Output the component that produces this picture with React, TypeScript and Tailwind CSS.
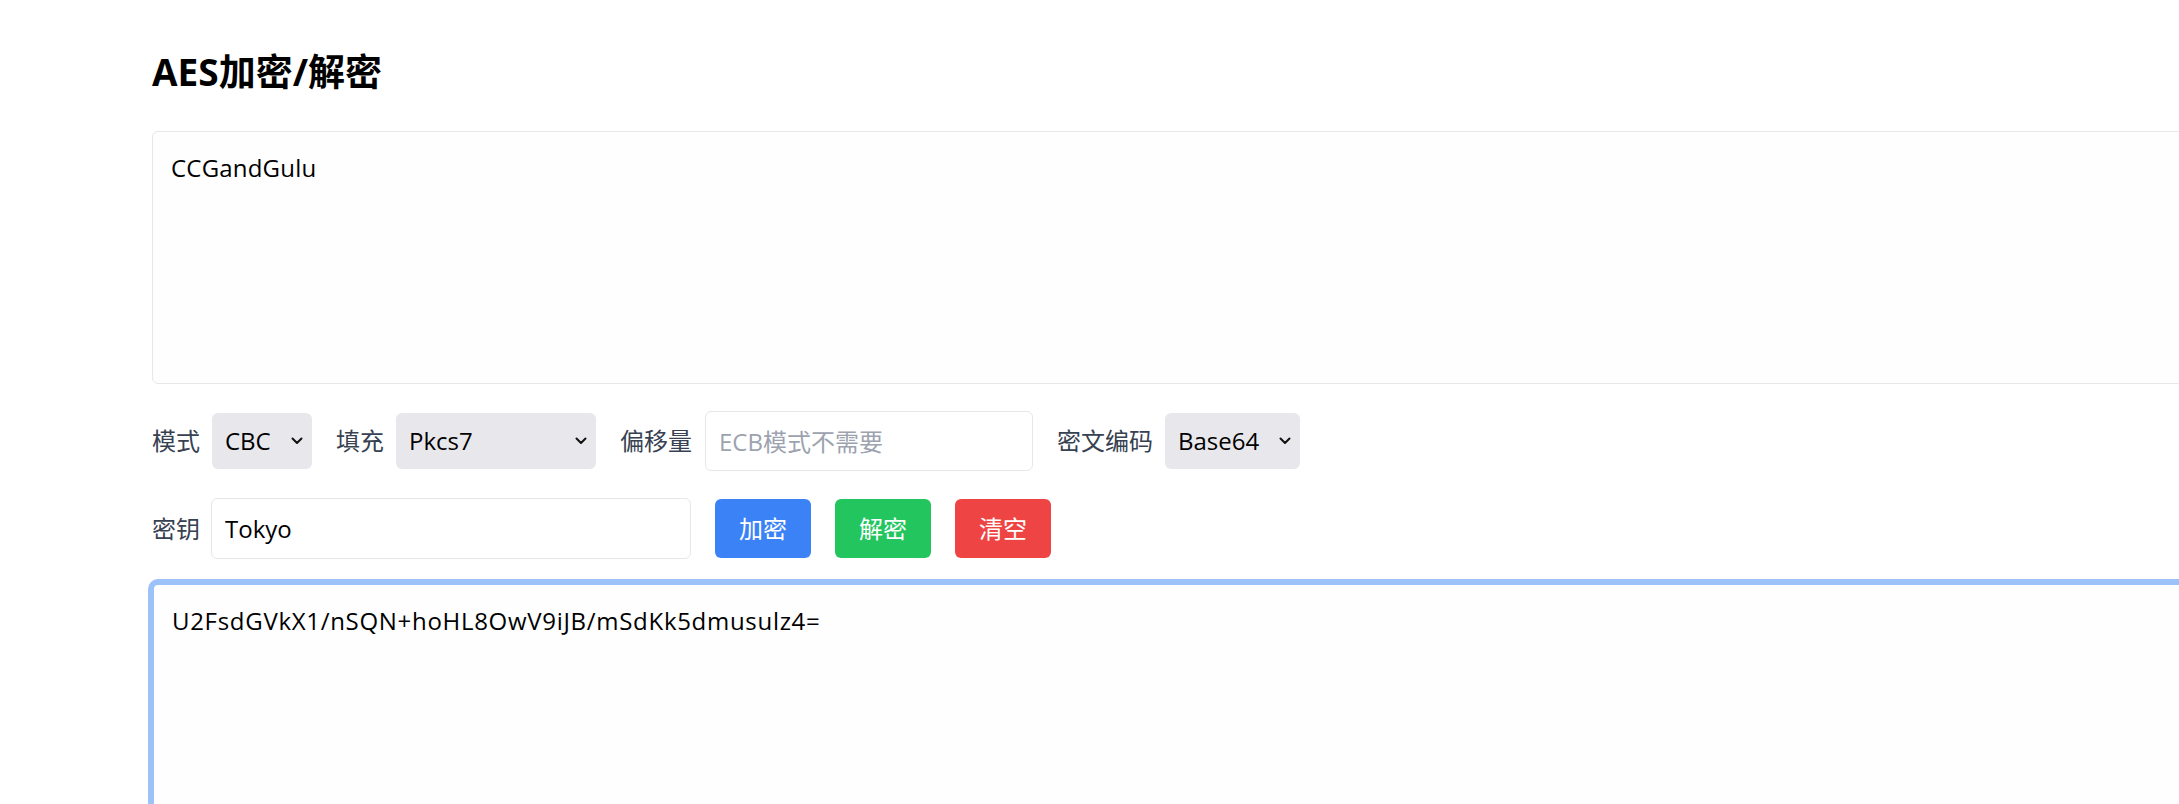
import React from "react";

const font = "font-['Open_Sans','Noto_Sans_CJK_SC',sans-serif]";

function Chevron() {
  return (
    <svg
      className="pointer-events-none absolute right-[9px] top-1/2 -translate-y-1/2"
      width="12"
      height="8"
      viewBox="0 0 12 8"
      fill="none"
    >
      <path d="M1.5 1.5 L6 6 L10.5 1.5" stroke="#111" strokeWidth="2" strokeLinecap="round" strokeLinejoin="round" />
    </svg>
  );
}

function Select({ value, options, width }: { value: string; options: string[]; width: string }) {
  return (
    <div className={`relative ${width}`}>
      <select
        defaultValue={value}
        className={`block h-[56px] w-full appearance-none rounded-[6px] bg-[#e8e8ec] pl-[13px] pr-[30px] text-[24px] text-black outline-none ${font}`}
      >
        {options.map((o) => (
          <option key={o} value={o}>
            {o}
          </option>
        ))}
      </select>
      <Chevron />
    </div>
  );
}

export default function App() {
  return (
    <div className={`h-[804px] w-full overflow-hidden bg-white pl-[152px] pt-[48px] ${font}`}>
      <h1 className="mb-[35px] text-[37px] font-bold leading-[48px] text-black">AES加密/解密</h1>

      <textarea
        defaultValue="CCGandGulu"
        className={`block h-[253px] w-[2200px] resize-none rounded-[6px] border border-[#e5e7eb] bg-[#fefefe] p-[18px] text-[24px] leading-[36px] tracking-[0.2px] text-black outline-none ${font}`}
      />

      <div className="mt-[27px] flex h-[60px] items-center gap-[24px] text-[24px] text-[#374151]">
        <div className="flex items-center gap-[12px]">
          <span>模式</span>
          <Select value="CBC" options={["CBC", "ECB", "CFB", "OFB", "CTR"]} width="w-[100px]" />
        </div>
        <div className="flex items-center gap-[12px]">
          <span>填充</span>
          <Select value="Pkcs7" options={["Pkcs7", "ZeroPadding", "NoPadding", "Iso10126", "AnsiX923"]} width="w-[200px]" />
        </div>
        <div className="flex items-center gap-[13px]">
          <span>偏移量</span>
          <input
            placeholder="ECB模式不需要"
            className={`h-[60px] w-[328px] rounded-[6px] border border-[#e5e7eb] bg-white px-[13px] text-[24px] text-black outline-none placeholder:text-[#9ca3af] ${font}`}
          />
        </div>
        <div className="flex items-center gap-[12px]">
          <span>密文编码</span>
          <Select value="Base64" options={["Base64", "Hex"]} width="w-[135px]" />
        </div>
      </div>

      <div className="mt-[27px] flex h-[61px] items-center text-[24px] text-[#374151]">
        <span>密钥</span>
        <input
          defaultValue="Tokyo"
          className={`ml-[11px] h-[61px] w-[480px] rounded-[6px] border border-[#e5e7eb] bg-white px-[13px] text-[24px] text-black outline-none ${font}`}
        />
        <div className="ml-[24px] flex items-center gap-[24px]">
          <button className="h-[59px] w-[96px] rounded-[6px] bg-[#3b82f6] text-[24px] text-white">加密</button>
          <button className="h-[59px] w-[96px] rounded-[6px] bg-[#22c55e] text-[24px] text-white">解密</button>
          <button className="h-[59px] w-[96px] rounded-[6px] bg-[#ef4444] text-[24px] text-white">清空</button>
        </div>
      </div>

      <textarea
        defaultValue="U2FsdGVkX1/nSQN+hoHL8OwV9iJB/mSdKk5dmusulz4="
        className={`mt-[24px] block h-[253px] w-[2200px] resize-none rounded-[6px] border-2 border-[#9dc1f9] bg-[#fefefe] p-[18px] text-[24px] leading-[36px] tracking-[0.7px] text-black outline-none ring-[4px] ring-[#9dc1f9] ${font}`}
      />
    </div>
  );
}
